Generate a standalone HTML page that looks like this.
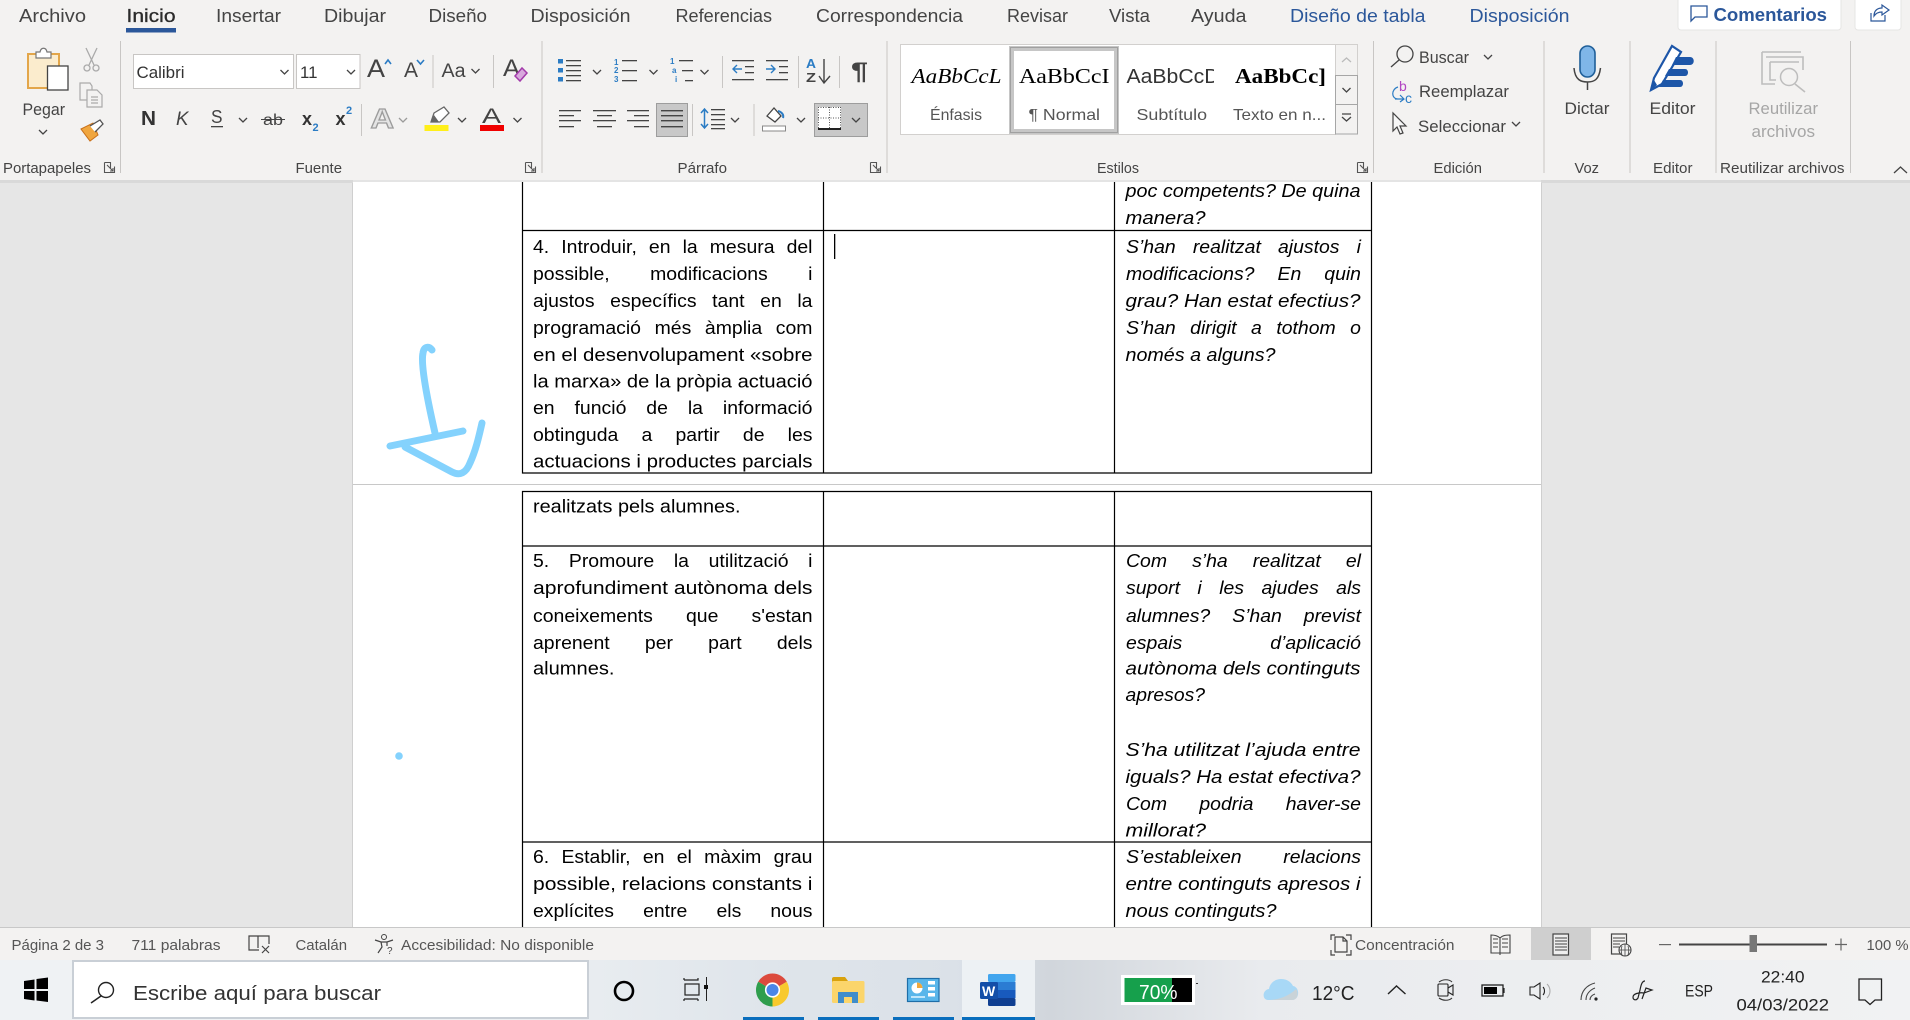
<!DOCTYPE html>
<html lang="es"><head><meta charset="utf-8"><title>Word</title>
<style>
html,body{margin:0;padding:0;width:1910px;height:1020px;overflow:hidden;background:#e6e6e6;font-family:"Liberation Sans",sans-serif}
svg{position:absolute;left:0;top:0}
svg text{font-family:"Liberation Sans",sans-serif}
.l,.r{position:absolute;white-space:nowrap;font-size:18.5px;line-height:20px;height:20px;color:#000;text-align:justify;text-align-last:justify;transform:scaleX(1.05);transform-origin:0 0}
.l{left:533px;width:266.2px}
.r{left:1125.5px;width:223.8px;font-style:italic}
</style></head><body>
<svg width="1910" height="1020" viewBox="0 0 1910 1020" xmlns="http://www.w3.org/2000/svg">
<defs>
<linearGradient id="tb" x1="0" x2="1" y1="0" y2="0">
<stop offset="0" stop-color="#eff2f4"/><stop offset=".25" stop-color="#eef1f3"/><stop offset=".4" stop-color="#dfe5eb"/><stop offset=".5" stop-color="#dbe1e8"/><stop offset=".55" stop-color="#d1d6dc"/><stop offset=".66" stop-color="#e9ebee"/><stop offset="1" stop-color="#f1f2f3"/>
</linearGradient>
<path id="c" d="M-4 -2L0 2L4 -2" fill="none" stroke="#444" stroke-width="1.3"/>
<path id="lc" d="M-4.5 -4.5H1.5V1.5M-4.5 -4.5V5.5H5.5V-0.5M-2 -2L4 4M1 4H4V1" fill="none" stroke="#555" stroke-width="1.1"/>
</defs>

<!-- page -->
<rect x="353" y="150" width="1188" height="790" fill="#fff"/>
<rect x="353" y="484" width="1188" height="1" fill="#c8c8c8"/>
<rect x="352" y="150" width="1" height="790" fill="#cfcfcf"/>
<rect x="1541" y="150" width="1" height="790" fill="#cfcfcf"/>
<g stroke="#000" stroke-width="1.2" fill="none">
<path d="M522.5 170V473H1371.5V170M823.5 170V473M1114.5 170V473M522.5 230.5H1371.5"/>
<path d="M522.5 930V491.5H1371.5V930M823.5 491.5V930M1114.5 491.5V930M522.5 546H1371.5M522.5 842H1371.5"/>
</g>
<rect x="834" y="234" width="1.3" height="25" fill="#000"/>
<!-- ink -->
<g fill="none" stroke="#84d2fd" stroke-width="7" stroke-linecap="round" stroke-linejoin="round">
<path d="M432 350C429 346 424 346 423 353C421 362 424 385 435 433"/>
<path d="M390 446L463 431"/>
<path d="M405 447L452 472C460 476 466 473 470 463C476 450 479 436 482 423"/>
</g>
<circle cx="399" cy="756" r="3.8" fill="#84d2fd"/>

<!-- fitted table lines -->
<g fill="#000" font-size="18.5">
<text x="533" y="361" textLength="279.5" lengthAdjust="spacingAndGlyphs">en el desenvolupament «sobre</text>
<text x="533" y="387.7" textLength="279.5" lengthAdjust="spacingAndGlyphs">la marxa» de la pròpia actuació</text>
<text x="533" y="467.7" textLength="279.5" lengthAdjust="spacingAndGlyphs">actuacions i productes parcials</text>
<text x="533" y="594" textLength="279.5" lengthAdjust="spacingAndGlyphs">aprofundiment autònoma dels</text>
<text x="533" y="890" textLength="279.5" lengthAdjust="spacingAndGlyphs">possible, relacions constants i</text>
<text x="533" y="512.5" textLength="207.5" lengthAdjust="spacingAndGlyphs">realitzats pels alumnes.</text>
<text x="533" y="674.5" textLength="81.5" lengthAdjust="spacingAndGlyphs">alumnes.</text>
<g font-style="italic">
<text x="1125.5" y="197" textLength="235" lengthAdjust="spacingAndGlyphs">poc competents? De quina</text>
<text x="1125.5" y="224" textLength="80" lengthAdjust="spacingAndGlyphs">manera?</text>
<text x="1125.5" y="307" textLength="235" lengthAdjust="spacingAndGlyphs">grau? Han estat efectius?</text>
<text x="1125.5" y="361" textLength="150" lengthAdjust="spacingAndGlyphs">només a alguns?</text>
<text x="1125.5" y="674.5" textLength="235" lengthAdjust="spacingAndGlyphs">autònoma dels continguts</text>
<text x="1125.5" y="701" textLength="79.5" lengthAdjust="spacingAndGlyphs">apresos?</text>
<text x="1125.5" y="756" textLength="235" lengthAdjust="spacingAndGlyphs">S’ha utilitzat l’ajuda entre</text>
<text x="1125.5" y="783" textLength="235" lengthAdjust="spacingAndGlyphs">iguals? Ha estat efectiva?</text>
<text x="1125.5" y="836.5" textLength="80.5" lengthAdjust="spacingAndGlyphs">millorat?</text>
<text x="1125.5" y="890" textLength="235" lengthAdjust="spacingAndGlyphs">entre continguts apresos i</text>
<text x="1125.5" y="917" textLength="151" lengthAdjust="spacingAndGlyphs">nous continguts?</text>
</g>
</g>

<!-- ribbon -->
<rect x="0" y="0" width="1910" height="180" fill="#f3f2f1"/>
<rect x="0" y="180" width="353" height="3" fill="#d9d9d9"/><rect x="1541" y="180" width="369" height="3" fill="#d9d9d9"/>
<rect x="353" y="180" width="1188" height="2" fill="#e4e4e4"/>
<g font-size="18" fill="#444">
<text x="19" y="22" textLength="67" lengthAdjust="spacingAndGlyphs">Archivo</text>
<text x="126.5" y="22" textLength="49" lengthAdjust="spacingAndGlyphs" fill="#2b2b2b" stroke="#2b2b2b" stroke-width=".3">Inicio</text>
<text x="216" y="22" textLength="65" lengthAdjust="spacingAndGlyphs">Insertar</text>
<text x="324" y="22" textLength="62" lengthAdjust="spacingAndGlyphs">Dibujar</text>
<text x="428.5" y="22" textLength="58.5" lengthAdjust="spacingAndGlyphs">Diseño</text>
<text x="530.5" y="22" textLength="100" lengthAdjust="spacingAndGlyphs">Disposición</text>
<text x="675.5" y="22" textLength="96.5" lengthAdjust="spacingAndGlyphs">Referencias</text>
<text x="816" y="22" textLength="147" lengthAdjust="spacingAndGlyphs">Correspondencia</text>
<text x="1007" y="22" textLength="61" lengthAdjust="spacingAndGlyphs">Revisar</text>
<text x="1109" y="22" textLength="41" lengthAdjust="spacingAndGlyphs">Vista</text>
<text x="1191" y="22" textLength="55.5" lengthAdjust="spacingAndGlyphs">Ayuda</text>
<text x="1290" y="22" textLength="135.5" lengthAdjust="spacingAndGlyphs" fill="#2b579a">Diseño de tabla</text>
<text x="1469.5" y="22" textLength="100" lengthAdjust="spacingAndGlyphs" fill="#2b579a">Disposición</text>
</g>
<rect x="126" y="28" width="50" height="4.5" fill="#2b579a"/>
<rect x="1678" y="-3" width="163" height="33" rx="3" fill="#fff" stroke="#e6e5e4"/>
<rect x="1855" y="-3" width="46" height="33" rx="3" fill="#fff" stroke="#e6e5e4"/>
<path d="M1691 6H1707V17H1695L1691 21Z" fill="none" stroke="#2b579a" stroke-width="1.3"/>
<text x="1713.5" y="21" font-size="18" font-weight="bold" fill="#2b579a" textLength="113.5" lengthAdjust="spacingAndGlyphs">Comentarios</text>
<path d="M1871 13V21H1885V15M1874 16C1874 10 1878 8 1882 8V5L1889 10L1882 15V12C1879 12 1876 13 1874 16Z" fill="none" stroke="#2b579a" stroke-width="1.2"/>

<!-- separators -->
<g fill="#c8c6c4">
<rect x="120" y="41" width="1" height="132"/><rect x="541.5" y="41" width="1" height="132"/><rect x="886.5" y="41" width="1" height="132"/><rect x="1373" y="41" width="1" height="132"/><rect x="1543.5" y="41" width="1" height="132"/><rect x="1629.5" y="41" width="1" height="132"/><rect x="1715.5" y="41" width="1" height="132"/><rect x="1850" y="41" width="1" height="132"/>
<rect x="432.5" y="55" width="1" height="33"/><rect x="493" y="55" width="1" height="33"/><rect x="361" y="104" width="1" height="32"/>
<rect x="722" y="56" width="1" height="32"/><rect x="798" y="56" width="1" height="32"/><rect x="839" y="56" width="1" height="32"/><rect x="692" y="104" width="1" height="32"/><rect x="753.5" y="104" width="1" height="32"/>
</g>

<!-- paste -->
<rect x="28" y="54" width="31" height="34" fill="#fbeccd" stroke="#e3a64a" stroke-width="2"/>
<path d="M36 58V52H40C41 47 46 47 47 52H51V58Z" fill="#fff" stroke="#777" stroke-width="1.2"/>
<rect x="47.5" y="66" width="20.5" height="24" fill="#fff" stroke="#444" stroke-width="1.3"/>
<g fill="none" stroke="#aaa" stroke-width="1.3"><path d="M86 48L94 65M97 48L89 65"/><circle cx="87" cy="68" r="3"/><circle cx="96" cy="68" r="3"/></g>
<path d="M87 100H80V83H90L92 86V90M87 90H97L102 95V107H87ZM91 97H98M91 100H98M91 103H98" fill="none" stroke="#aaa" stroke-width="1.2"/>
<path d="M81 129L93 123L98 135L90 141Z" fill="#f0a63f" stroke="#c9701a"/>
<path d="M90 126L100 120L103 124L95 132" fill="#fff" stroke="#555" stroke-width="1.3"/>
<text x="22.5" y="115" font-size="16.5" fill="#444" textLength="42.5" lengthAdjust="spacingAndGlyphs">Pegar</text>
<use href="#c" x="43" y="132"/>

<!-- group labels -->
<g font-size="15" fill="#444">
<text x="3" y="173" textLength="88" lengthAdjust="spacingAndGlyphs">Portapapeles</text>
<text x="295.5" y="173" textLength="46.5" lengthAdjust="spacingAndGlyphs">Fuente</text>
<text x="677.5" y="173" textLength="49.5" lengthAdjust="spacingAndGlyphs">Párrafo</text>
<text x="1097" y="173" textLength="42" lengthAdjust="spacingAndGlyphs">Estilos</text>
<text x="1433.5" y="173" textLength="48.5" lengthAdjust="spacingAndGlyphs">Edición</text>
<text x="1574.5" y="173" textLength="24.5" lengthAdjust="spacingAndGlyphs">Voz</text>
<text x="1653" y="173" textLength="39.5" lengthAdjust="spacingAndGlyphs">Editor</text>
<text x="1720" y="173" textLength="124.5" lengthAdjust="spacingAndGlyphs">Reutilizar archivos</text>
</g>
<use href="#lc" x="109" y="167"/><use href="#lc" x="530" y="167"/><use href="#lc" x="875" y="167"/><use href="#lc" x="1362" y="167"/>
<path d="M1894 173L1900.5 167L1907 173" fill="none" stroke="#444" stroke-width="1.3"/>

<!-- font -->
<rect x="133.5" y="54.5" width="160" height="34" fill="#fff" stroke="#c8c6c4"/>
<rect x="296.5" y="54.5" width="63.5" height="34" fill="#fff" stroke="#c8c6c4"/>
<text x="136.5" y="78" font-size="17" fill="#333" textLength="48" lengthAdjust="spacingAndGlyphs">Calibri</text>
<text x="300" y="78" font-size="17" fill="#333" textLength="17.5" lengthAdjust="spacingAndGlyphs">11</text>
<use href="#c" x="284.5" y="72"/><use href="#c" x="351" y="72"/>
<text x="367" y="77" font-size="25" fill="#444" textLength="18" lengthAdjust="spacingAndGlyphs">A</text>
<path d="M385 64L388 60L391 64" fill="none" stroke="#2b7cc4" stroke-width="1.6"/>
<text x="404" y="77" font-size="21" fill="#444" textLength="14" lengthAdjust="spacingAndGlyphs">A</text>
<path d="M417 60L420.5 64L424 60" fill="none" stroke="#2b7cc4" stroke-width="1.6"/>
<text x="441.5" y="77" font-size="19" fill="#444" textLength="24" lengthAdjust="spacingAndGlyphs">Aa</text>
<use href="#c" x="475.5" y="71"/>
<text x="503" y="76" font-size="24" fill="#444" textLength="17" lengthAdjust="spacingAndGlyphs">A</text>
<path d="M515 76L522 68L527 73L520 81Z" fill="#d8a9dd" stroke="#a33bab" stroke-width="1.5"/>

<text x="141" y="125" font-size="20" font-weight="bold" fill="#333" textLength="15" lengthAdjust="spacingAndGlyphs">N</text>
<text x="176" y="125" font-size="19" font-style="italic" fill="#444" textLength="12.5" lengthAdjust="spacingAndGlyphs">K</text>
<text x="211" y="123" font-size="18" fill="#444" textLength="11.5" lengthAdjust="spacingAndGlyphs">S</text>
<rect x="211" y="126" width="12" height="1.3" fill="#444"/>
<use href="#c" x="243" y="120"/>
<text x="263" y="125" font-size="16" fill="#444" textLength="20" lengthAdjust="spacingAndGlyphs">ab</text><rect x="261" y="119" width="24" height="1" fill="#444"/>
<text x="302" y="125" font-size="18" font-weight="bold" fill="#333" textLength="10" lengthAdjust="spacingAndGlyphs">x</text><text x="312.5" y="131" font-size="11" fill="#2b7cc4" font-weight="bold">2</text>
<text x="335.5" y="125" font-size="18" font-weight="bold" fill="#333" textLength="10" lengthAdjust="spacingAndGlyphs">x</text><text x="346" y="114" font-size="11" fill="#2b7cc4" font-weight="bold">2</text>
<text x="370.5" y="128" font-size="28" font-weight="bold" fill="#e4e4e4" stroke="#9c9c9c" stroke-width="1.2" textLength="23.5" lengthAdjust="spacingAndGlyphs">A</text>
<use href="#c" x="403" y="120" opacity=".5"/>
<path d="M431 122L434 113L444 107L449 113L440 122Z" fill="#fff" stroke="#666" stroke-width="1.3"/><path d="M431 122L434 115L439 122Z" fill="#666"/>
<rect x="424.5" y="125" width="24" height="6" fill="#ffef1a"/>
<use href="#c" x="462" y="120"/>
<text x="482" y="123" font-size="21" fill="#444" textLength="19" lengthAdjust="spacingAndGlyphs">A</text>
<rect x="480" y="125" width="24" height="6" fill="#f00000"/>
<use href="#c" x="517.5" y="120"/>

<!-- para row1 -->
<g fill="#444">
<rect x="558" y="59" width="5" height="4.5" fill="#2b7cc4"/><rect x="558" y="68" width="5" height="4.5" fill="#2b7cc4"/><rect x="558" y="77" width="5" height="4.5" fill="#2b7cc4"/>
<rect x="566" y="60" width="15" height="1.3"/><rect x="566" y="65" width="15" height="1.3"/><rect x="566" y="70" width="15" height="1.3"/><rect x="566" y="75" width="15" height="1.3"/><rect x="566" y="80" width="15" height="1.3"/>
<rect x="622" y="60" width="15" height="1.3"/><rect x="622" y="70" width="15" height="1.3"/><rect x="622" y="80" width="15" height="1.3"/>
<rect x="679" y="60" width="14" height="1.3"/><rect x="682" y="70" width="11" height="1.3"/><rect x="685" y="80" width="8" height="1.3"/>
<rect x="732" y="60" width="22" height="1.3"/><rect x="745" y="66" width="9" height="1.3"/><rect x="745" y="72" width="9" height="1.3"/><rect x="732" y="79" width="22" height="1.3"/>
<rect x="766" y="60" width="22" height="1.3"/><rect x="779" y="66" width="9" height="1.3"/><rect x="779" y="72" width="9" height="1.3"/><rect x="766" y="79" width="22" height="1.3"/>
</g>
<g font-size="8" font-weight="bold" fill="#2b7cc4"><text x="614" y="65">1</text><text x="614" y="73">2</text><text x="614" y="82">3</text><text x="670" y="64">1</text><text x="672" y="73">a</text><text x="675" y="82">i</text></g>
<use href="#c" x="597" y="72"/><use href="#c" x="653.5" y="72"/><use href="#c" x="704.5" y="72"/>
<path d="M742 69H733M737 65L733 69L737 73" fill="none" stroke="#2b7cc4" stroke-width="1.4"/>
<path d="M766 69H775M771 65L775 69L771 73" fill="none" stroke="#2b7cc4" stroke-width="1.4"/>
<text x="806" y="68" font-size="12.5" font-weight="bold" fill="#2b7cc4" textLength="10" lengthAdjust="spacingAndGlyphs">A</text>
<text x="806" y="82" font-size="12.5" font-weight="bold" fill="#444" textLength="10" lengthAdjust="spacingAndGlyphs">Z</text>
<path d="M824 59V82M819 76L824 83L830 76" fill="none" stroke="#444" stroke-width="1.4"/>
<text x="851" y="79" font-size="24" font-weight="bold" fill="#444" textLength="17" lengthAdjust="spacingAndGlyphs">¶</text>

<!-- para row2 -->
<rect x="656.5" y="103.5" width="31" height="33" fill="#c8c8c8" stroke="#9d9d9d"/>
<g fill="#444">
<rect x="559" y="110" width="22" height="1.3"/><rect x="559" y="115" width="15" height="1.3"/><rect x="559" y="120" width="22" height="1.3"/><rect x="559" y="126" width="15" height="1.3"/>
<rect x="593" y="110" width="23" height="1.3"/><rect x="597" y="115" width="15" height="1.3"/><rect x="593" y="120" width="23" height="1.3"/><rect x="597" y="126" width="15" height="1.3"/>
<rect x="627" y="110" width="22" height="1.3"/><rect x="634" y="115" width="15" height="1.3"/><rect x="627" y="120" width="22" height="1.3"/><rect x="634" y="126" width="15" height="1.3"/>
<rect x="661" y="110" width="22" height="1.4"/><rect x="661" y="115" width="22" height="1.4"/><rect x="661" y="120" width="22" height="1.4"/><rect x="661" y="126" width="22" height="1.4"/>
<rect x="711" y="109" width="14" height="1.3"/><rect x="711" y="114" width="14" height="1.3"/><rect x="711" y="119" width="14" height="1.3"/><rect x="711" y="124" width="14" height="1.3"/><rect x="711" y="128" width="14" height="1.3"/>
</g>
<path d="M704.5 109V128M701 113L704.5 109L708 113M701 124L704.5 128L708 124" fill="none" stroke="#2b7cc4" stroke-width="1.5"/>
<use href="#c" x="735" y="120"/>
<path d="M767 116L774 108L781 116L775 122Z" fill="#fff" stroke="#444" stroke-width="1.3"/><path d="M778 111C782 112 784 115 783 118" fill="none" stroke="#2b7cc4" stroke-width="2"/>
<rect x="762.5" y="126" width="23" height="5" fill="#fff" stroke="#888"/>
<use href="#c" x="801" y="120"/>
<rect x="814.5" y="103.5" width="53" height="33" fill="#c8c8c8" stroke="#9d9d9d"/>
<rect x="818" y="107" width="23" height="22" fill="#fff"/>
<path d="M818 107.5H841M818 118H841M829.5 107V129M818.5 107V129M840.5 107V129" stroke="#555" stroke-dasharray="1 1.5" fill="none"/>
<rect x="818" y="128" width="23" height="2" fill="#222"/>
<use href="#c" x="856" y="120"/>

<!-- styles -->
<rect x="900.5" y="44.5" width="435" height="90" fill="#fff" stroke="#d2d0ce"/>
<rect x="1011.5" y="48.5" width="105" height="83" fill="#fff" stroke="#c6c6c6" stroke-width="5"/>
<rect x="1010.5" y="47.5" width="107" height="85" fill="none" stroke="#a0a0a0"/>
<g font-size="21" fill="#000">
<text x="911.5" y="83" font-style="italic" textLength="90" lengthAdjust="spacingAndGlyphs" style="font-family:'Liberation Serif',serif">AaBbCcL</text>
<text x="1019" y="83" textLength="90.5" lengthAdjust="spacingAndGlyphs" style="font-family:'Liberation Serif',serif">AaBbCcI</text>
<text x="1235" y="83" font-weight="bold" textLength="91" lengthAdjust="spacingAndGlyphs" style="font-family:'Liberation Serif',serif">AaBbCc]</text>
</g>
<text x="1126.5" y="83" font-size="20" fill="#333" textLength="93" lengthAdjust="spacingAndGlyphs">AaBbCcD</text>
<rect x="1214" y="60" width="8" height="30" fill="#fff"/>
<g font-size="16" fill="#555">
<text x="930" y="120" textLength="52" lengthAdjust="spacingAndGlyphs">Énfasis</text>
<text x="1028.5" y="120" textLength="71.5" lengthAdjust="spacingAndGlyphs">¶ Normal</text>
<text x="1136.5" y="120" textLength="70.5" lengthAdjust="spacingAndGlyphs">Subtítulo</text>
<text x="1233" y="120" textLength="93" lengthAdjust="spacingAndGlyphs">Texto en n...</text>
</g>
<rect x="1335.5" y="44.5" width="22" height="31" fill="#f3f2f1" stroke="#d2d0ce"/>
<rect x="1335.5" y="75.5" width="22" height="29" fill="#f3f2f1" stroke="#a6a6a6"/>
<rect x="1335.5" y="104.5" width="22" height="29.5" fill="#f3f2f1" stroke="#a6a6a6"/>
<path d="M1342 62L1346.5 58L1351 62" fill="none" stroke="#bbb" stroke-width="1.3"/>
<use href="#c" x="1346.5" y="90"/>
<path d="M1342 114H1351M1342 117L1346.5 121L1351 117" fill="none" stroke="#444" stroke-width="1.3"/>

<!-- edit -->
<circle cx="1405" cy="54" r="8" fill="none" stroke="#444" stroke-width="1.3"/><path d="M1399 60L1391 67" stroke="#444" stroke-width="1.4"/>
<g font-size="16.5" fill="#444">
<text x="1419" y="63" textLength="50" lengthAdjust="spacingAndGlyphs">Buscar</text>
<text x="1419" y="97" textLength="90" lengthAdjust="spacingAndGlyphs">Reemplazar</text>
<text x="1418" y="132" textLength="88" lengthAdjust="spacingAndGlyphs">Seleccionar</text>
<text x="1564.5" y="114" textLength="45" lengthAdjust="spacingAndGlyphs">Dictar</text>
<text x="1649.5" y="114" textLength="46" lengthAdjust="spacingAndGlyphs">Editor</text>
<text x="1748.5" y="114" textLength="69.5" lengthAdjust="spacingAndGlyphs" fill="#a6a6a6">Reutilizar</text>
<text x="1751.5" y="137" textLength="63.5" lengthAdjust="spacingAndGlyphs" fill="#a6a6a6">archivos</text>
</g>
<use href="#c" x="1488" y="57"/><use href="#c" x="1516" y="124"/>
<text x="1399" y="91" font-size="14" fill="#b146c2">b</text><text x="1405" y="103" font-size="14" fill="#2b7cc4">c</text>
<path d="M1398 87C1391 89 1391 99 1398 99M1395 99H1404M1400 95L1404 99L1400 102" fill="none" stroke="#2b7cc4" stroke-width="1.2"/>
<path d="M1393 113V131L1397 127L1400 134L1403 133L1400 126L1406 126Z" fill="#f7f7f7" stroke="#444" stroke-width="1.2"/>

<!-- mic -->
<rect x="1580" y="46" width="15" height="31" rx="7.5" fill="#7fb6e8" stroke="#1f5f99" stroke-width="1.6"/>
<path d="M1574 68C1575 80 1581 82 1587.5 82C1594 82 1599 80 1600.5 68M1587.5 82V90" fill="none" stroke="#444" stroke-width="1.5"/>
<!-- editor -->
<path d="M1651 90L1654 78L1672 46L1681 52L1662 84Z" fill="#fff" stroke="#1d56a8" stroke-width="2.2"/>
<path d="M1651 90L1657 85L1654 80Z" fill="#1d56a8"/>
<path d="M1676 57H1690C1695 57 1695 65 1690 65H1672ZM1669 69H1685C1689 69 1689 76 1685 76H1665ZM1663 80H1680C1684 80 1684 87 1680 87H1659Z" fill="#1d56a8"/>
<!-- reuse -->
<path d="M1762 52H1801M1762 52V84H1775M1766 57H1803V70M1770 62V80H1776M1770 62H1799" fill="none" stroke="#bdbdbd" stroke-width="1.6"/>
<circle cx="1789" cy="77" r="8.5" fill="none" stroke="#bdbdbd" stroke-width="1.5"/><path d="M1795 84L1805 92" stroke="#bdbdbd" stroke-width="1.6"/>

<!-- status -->
<rect x="0" y="927" width="1910" height="33" fill="#f3f2f1"/>
<rect x="0" y="927" width="1910" height="1" fill="#c8c8c8"/>
<rect x="1531" y="928" width="60" height="32" fill="#cfcfcf"/>
<g font-size="15" fill="#555">
<text x="11.5" y="950" textLength="92.5" lengthAdjust="spacingAndGlyphs">Página 2 de 3</text>
<text x="131.5" y="950" textLength="89" lengthAdjust="spacingAndGlyphs">711 palabras</text>
<text x="295.5" y="950" textLength="51.5" lengthAdjust="spacingAndGlyphs">Catalán</text>
<text x="401" y="950" textLength="193" lengthAdjust="spacingAndGlyphs">Accesibilidad: No disponible</text>
<text x="1355" y="950" textLength="99.5" lengthAdjust="spacingAndGlyphs">Concentración</text>
<text x="1866.5" y="950" textLength="42" lengthAdjust="spacingAndGlyphs">100 %</text>
</g>
<path d="M259 950H249V936H258V948M258 936H269V944M262 946L269 953M269 946L262 953" fill="none" stroke="#444" stroke-width="1.2"/>
<circle cx="384" cy="937" r="2.5" fill="none" stroke="#444"/><path d="M375 940L381 942H387L393 940M381 942L382 947L378 953M387 942V946" fill="none" stroke="#444" stroke-width="1.2"/>
<text x="387" y="954" font-size="10" fill="#444">?</text>
<path d="M1335 935H1331V940M1346 935H1351V940M1331 950V955H1335M1351 950V955H1346M1335 937H1343L1347 941V952H1335ZM1343 937V941H1347" fill="none" stroke="#444" stroke-width="1.2"/>
<path d="M1500 938C1497 935 1493 935 1491 935V953H1500C1503 953 1507 953 1510 953V935C1507 935 1503 935 1500 938V955M1493 939H1498M1493 943H1498M1493 947H1498M1502 939H1508M1502 943H1508M1502 947H1508" fill="none" stroke="#444" stroke-width="1.1"/>
<rect x="1553" y="934" width="15.5" height="21" fill="#eee" stroke="#444" stroke-width="1.2"/>
<path d="M1555 938H1567M1555 941H1567M1555 944H1567M1555 947H1567M1555 950H1567" stroke="#444"/>
<rect x="1611.5" y="934" width="15" height="20" fill="none" stroke="#444" stroke-width="1.2"/>
<path d="M1613 938H1625M1613 941H1625M1613 944H1620M1613 947H1619" stroke="#444"/>
<circle cx="1625" cy="950" r="6" fill="#f3f2f1" stroke="#444" stroke-width="1.1"/><path d="M1619 950H1631M1625 944V956M1622 946C1621 949 1621 952 1622 955M1628 946C1629 949 1629 952 1628 955" fill="none" stroke="#444" stroke-width=".8"/>
<rect x="1659" y="944" width="12" height="1.2" fill="#666"/>
<rect x="1679" y="943.5" width="148" height="2" fill="#444"/>
<rect x="1749.5" y="935" width="7.5" height="17" fill="#777"/>
<path d="M1835 944.5H1847M1841 938.5V950.5" stroke="#666" stroke-width="1.2"/>

<!-- taskbar -->
<rect x="0" y="960" width="1910" height="60" fill="url(#tb)"/>
<rect x="962" y="960" width="73" height="60" fill="#edf1f4"/>
<path d="M24 981L34.5 979.5V989H24ZM36.5 979L48 977.5V989H36.5ZM24 991H34.5V1000.5L24 999ZM36.5 991H48V1002L36.5 1000.5Z" fill="#000"/>
<rect x="73" y="961" width="515" height="57" fill="#fff" stroke="#c9cfd6" stroke-width="2"/>
<circle cx="106" cy="990" r="7.5" fill="none" stroke="#222" stroke-width="1.4"/><path d="M101 996L91 1003" stroke="#222" stroke-width="1.5"/>
<text x="133" y="1000" font-size="20" fill="#333" textLength="248" lengthAdjust="spacingAndGlyphs">Escribe aquí para buscar</text>
<circle cx="624" cy="991" r="9" fill="none" stroke="#000" stroke-width="2.6"/>
<path d="M684 980H698V978M684 978V980M684 999H698M684 1001V999M698 1001V999M698 978V980" fill="none" stroke="#222" stroke-width="1.2"/>
<rect x="685" y="984" width="14" height="11" fill="none" stroke="#222" stroke-width="1.2"/>
<path d="M706.5 977V1001" stroke="#222"/><rect x="704" y="985" width="4" height="4" fill="#111"/>
<!-- chrome -->
<path d="M758.2 981.75A16.5 16.5 0 0 1 786.8 981.75L772.5 990Z" fill="#dc4a3d"/>
<path d="M786.8 981.75A16.5 16.5 0 0 1 772.5 1006.5L772.5 990Z" fill="#f8c92d"/>
<path d="M772.5 1006.5A16.5 16.5 0 0 1 758.2 981.75L772.5 990Z" fill="#2f9e4d"/>
<circle cx="772.5" cy="990" r="7.6" fill="#fff"/><circle cx="772.5" cy="990" r="6" fill="#4a86e8"/>
<!-- folder -->
<path d="M832 979Q832 977 834 977H845L848 981V985H832Z" fill="#d9a20e"/>
<rect x="832" y="981" width="32.5" height="22" rx="1.5" fill="#fbd56b"/>
<path d="M838 992H858V1003H852V997H844V1003H838Z" fill="#3f8dcb"/>
<!-- control panel -->
<rect x="907.5" y="978.5" width="31.5" height="23" fill="#59b6ea" stroke="#1e6ea8" stroke-width="1.2"/>
<circle cx="917" cy="988" r="5.5" fill="#fff"/><path d="M917 988V982.5A5.5 5.5 0 0 1 922.5 988Z" fill="#f0a83c"/>
<rect x="928" y="981" width="7" height="3.5" fill="#fff"/><rect x="928" y="987" width="7" height="3.5" fill="#fff"/><rect x="928" y="993" width="7" height="3.5" fill="#fff"/><rect x="911" y="996" width="14" height="2" fill="#bfe6fb"/>
<!-- word -->
<rect x="988" y="974" width="27.5" height="8" rx="1.5" fill="#41a5ee"/><rect x="988" y="982" width="27.5" height="8" fill="#2b7cd3"/><rect x="988" y="990" width="27.5" height="8" fill="#185abd"/><rect x="988" y="998" width="27.5" height="8" rx="1.5" fill="#103f91"/>
<rect x="980" y="982" width="18" height="17" rx="1.5" fill="#134ea8"/>
<text x="982" y="996" font-size="14" font-weight="bold" fill="#fff">W</text>
<g fill="#0a6ebd"><rect x="743" y="1017" width="61" height="3"/><rect x="818" y="1017" width="61" height="3"/><rect x="893" y="1017" width="61" height="3"/><rect x="962" y="1017" width="73" height="3"/></g>
<!-- battery widget -->
<rect x="1121" y="975" width="74" height="30" fill="#fff"/>
<rect x="1124.5" y="978" width="47.5" height="24" fill="#16a04c"/><rect x="1172" y="978" width="20" height="24" fill="#000"/>
<rect x="1196" y="983" width="2" height="1" fill="#333"/>
<text x="1139" y="999" font-size="20" fill="#fff" textLength="38.5" lengthAdjust="spacingAndGlyphs">70%</text>
<!-- cloud -->
<path d="M1268 1000C1262 1000 1262 990 1269 989C1270 983 1275 979 1281 979C1287 979 1291 982 1293 986C1300 987 1300 1000 1292 1000Z" fill="#a8d8f6"/>
<path d="M1268 1000C1277 1000 1288 997 1296 989C1299 993 1298 1000 1292 1000Z" fill="#c9d3d8"/>
<g fill="#222">
<text x="1312" y="1000" font-size="20" textLength="42.5" lengthAdjust="spacingAndGlyphs">12°C</text>
<text x="1685" y="996.5" font-size="16.5" textLength="28" lengthAdjust="spacingAndGlyphs">ESP</text>
<text x="1761" y="982.5" font-size="17" textLength="43.5" lengthAdjust="spacingAndGlyphs">22:40</text>
<text x="1736.5" y="1010.5" font-size="17" textLength="92.5" lengthAdjust="spacingAndGlyphs">04/03/2022</text>
</g>
<path d="M1388 994L1396.5 986L1405.5 994" fill="none" stroke="#222" stroke-width="1.4"/>
<path d="M1439 982C1443 979 1449 979 1452 982M1439 998C1443 1001 1449 1001 1452 998" fill="none" stroke="#333" stroke-width="1.1"/>
<rect x="1438" y="984" width="10" height="12" rx="1" fill="none" stroke="#222" stroke-width="1.1"/><path d="M1448 988L1453 985V995L1448 992" fill="none" stroke="#222" stroke-width="1.1"/>
<rect x="1482" y="985" width="21" height="11" fill="none" stroke="#222" stroke-width="1.3"/><rect x="1484" y="987" width="13" height="7" fill="#000"/><rect x="1503" y="988" width="1.6" height="5" fill="#222"/>
<path d="M1530 987H1534L1540 983V999L1534 995H1530ZM1543 987C1545 989 1545 993 1543 995" fill="none" stroke="#222" stroke-width="1.1"/>
<path d="M1547 984C1551 988 1551 994 1547 998" fill="none" stroke="#aaa" stroke-width="1.1"/>
<path d="M1581 1000C1581 991 1587 985 1595 983M1586 1000C1586 994 1590 990 1595 988M1590 1000C1590 997 1592 995 1595 994" fill="none" stroke="#444" stroke-width="1.1"/><circle cx="1596" cy="999" r="1.6" fill="#222"/>
<path d="M1645 981C1642 981 1641 985 1640 990L1638 998C1636 1001 1633 1000 1633 997C1633 994 1639 992 1644 993L1652 990L1646 988L1642 999" fill="none" stroke="#222" stroke-width="1.2"/>
<path d="M1859 979H1881.5V1000H1875L1870 1004.5L1865 1000H1859Z" fill="none" stroke="#222" stroke-width="1.3"/>
</svg>

<div class="l" style="top:237px">4. Introduir, en la mesura del</div>
<div class="l" style="top:264px">possible, modificacions i</div>
<div class="l" style="top:291px">ajustos específics tant en la</div>
<div class="l" style="top:318px">programació més àmplia com</div>
<div class="l" style="top:398px">en funció de la informació</div>
<div class="l" style="top:425px">obtinguda a partir de les</div>
<div class="l" style="top:551px">5. Promoure la utilització i</div>
<div class="l" style="top:606px">coneixements que s'estan</div>
<div class="l" style="top:633px">aprenent per part dels</div>
<div class="l" style="top:847px">6. Establir, en el màxim grau</div>
<div class="l" style="top:901px">explícites entre els nous</div>

<div class="r" style="top:237px">S’han realitzat ajustos i</div>
<div class="r" style="top:264px">modificacions? En quin</div>
<div class="r" style="top:318px">S’han dirigit a tothom o</div>
<div class="r" style="top:551px">Com s’ha realitzat el</div>
<div class="r" style="top:578px">suport i les ajudes als</div>
<div class="r" style="top:606px">alumnes? S’han previst</div>
<div class="r" style="top:633px">espais d’aplicació</div>
<div class="r" style="top:794px">Com podria haver-se</div>
<div class="r" style="top:847px">S’estableixen relacions</div>
</body></html>
